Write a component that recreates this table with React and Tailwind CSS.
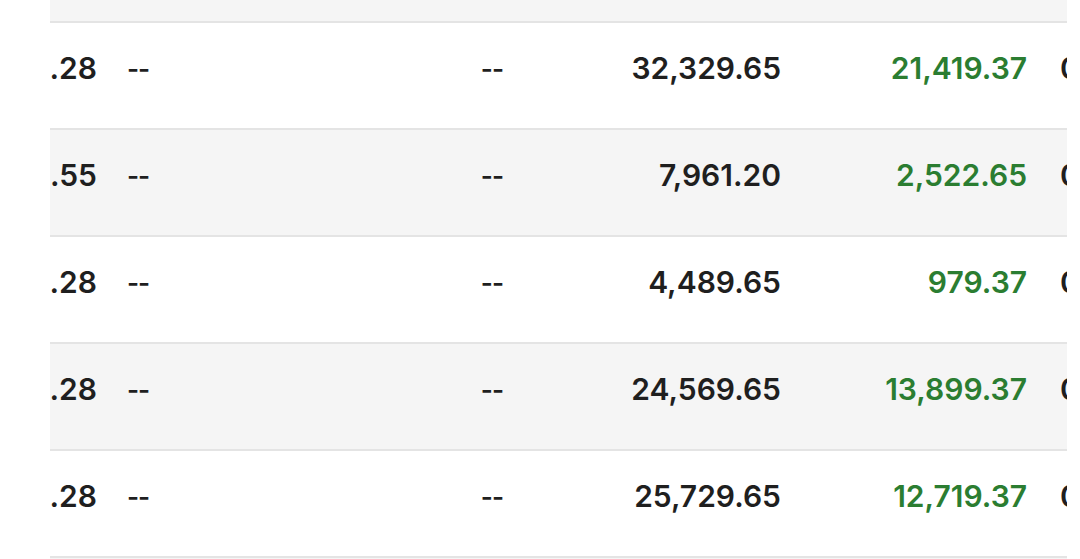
const rows = [
  { a: '1,832.28', b: '32,329.65', c: '21,419.37', d: '0.00' },
  { a: '5,438.55', b: '7,961.20', c: '2,522.65', d: '0.00' },
  { a: '3,510.28', b: '4,489.65', c: '979.37', d: '0.00' },
  { a: '10,670.28', b: '24,569.65', c: '13,899.37', d: '0.00' },
  { a: '13,010.28', b: '25,729.65', c: '12,719.37', d: '0.00' },
]

function Row({ row, shaded }) {
  return (
    <div
      className={`flex items-center h-[107px] pb-[14px] border-b-2 border-[#e4e4e4] ${
        shaded ? 'bg-[#f5f5f5]' : 'bg-white'
      }`}
    >
      <div className="w-[47px] shrink-0 flex justify-end whitespace-nowrap">{row.a}</div>
      <div className="w-[336px] shrink-0 pl-[30px] text-[26px] tracking-[-1px]">--</div>
      <div className="w-[70px] shrink-0 text-right text-[26px] tracking-[-1px]">--</div>
      <div className="w-[278px] shrink-0 text-right">{row.b}</div>
      <div className="w-[246px] shrink-0 text-right text-[#2b7d31]">{row.c}</div>
      <div className="shrink-0 pl-[33px] whitespace-nowrap">{row.d}</div>
    </div>
  )
}

export default function App() {
  return (
    <div className="w-[1080px] h-[559px] bg-white overflow-hidden flex">
      <div className="w-[50px] shrink-0 bg-white" />
      <div
        className="w-[1017px] shrink-0 overflow-hidden text-[30px] text-[#1f1f1f] font-semibold"
        style={{ fontFamily: 'Inter, "Noto Sans", sans-serif' }}
      >
        <div className="h-[23px] bg-[#f5f5f5] border-b-2 border-[#e4e4e4]" />
        {rows.map((row, i) => (
          <Row key={i} row={row} shaded={i % 2 === 1} />
        ))}
        <div className="h-[20px] bg-[#f5f5f5]" />
      </div>
      <div className="flex-1 bg-white" />
    </div>
  )
}
